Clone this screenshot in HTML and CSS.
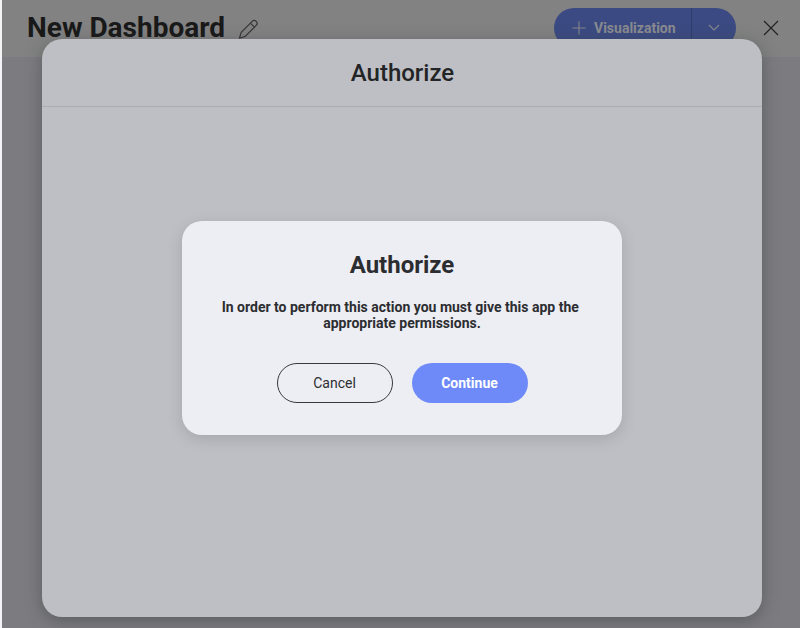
FILE: index.html
```html
<!DOCTYPE html>
<html lang="en">
<head>
<meta charset="utf-8">
<title>New Dashboard</title>
<link rel="stylesheet" href="styles.css">
</head>
<body>
<div class="app">
  <header class="topbar">
    <h1 class="title">New Dashboard</h1>
    <svg class="pencil" width="22" height="22" viewBox="0 0 22 22"><path d="M1.4 20.2L3.2 14.4L14.2 3.4Q16.2 1.4 18.2 3.4Q20.2 5.4 18.2 7.4L7.2 18.4ZM12.4 5.2L16.4 9.2"/></svg>
    <div class="split">
      <div class="split-main">
        <svg width="14" height="14" viewBox="0 0 14 14"><path d="M7 .5v13M.5 7h13"/></svg>
        <span>Visualization</span>
      </div>
      <div class="split-arrow"><svg width="12" height="8" viewBox="0 0 12 8"><path d="M1 1l5 5 5-5"/></svg></div>
    </div>
    <svg class="close" width="16" height="16" viewBox="0 0 16 16"><path d="M1 1l14 14M15 1L1 15"/></svg>
  </header>
</div>
<section class="panel">
  <h2 class="panel-title">Authorize</h2>
  <div class="panel-body">
    <div class="dialog">
      <h2 class="dialog-title">Authorize</h2>
      <p class="message">In order to perform this action you must give this app the <br>appropriate permissions.</p>
      <div class="actions">
        <button class="btn cancel">Cancel</button>
        <button class="btn continue">Continue</button>
      </div>
    </div>
  </div>
</section>
</body>
</html>
```
FILE: styles.css
```css
* { box-sizing: border-box; }
body { margin: 0; height: 628px; overflow: hidden; position: relative; background: #f4f4f6; font-family: Roboto, sans-serif; color: #2c2d30; }
h1, h2, p { margin: 0; }
svg { display: block; fill: none; flex: none; }
.app { height: 628px; margin-left: 2px; background: #7c7b80; }
.topbar { display: flex; align-items: center; height: 57px; padding: 0 21px 3px 25px; background: #828282; }
.title { width: 198px; margin-top: 2px; font-size: 28px; line-height: 34px; font-weight: 700; color: #191919; white-space: nowrap; }
.pencil { margin: 3px 0 0 13px; stroke: #363636; stroke-width: 1.2; stroke-linejoin: round; }
.split { display: flex; width: 182px; height: 40px; margin: 2px 27px 0 auto; border-radius: 20px; overflow: hidden; background: #3b4a82; color: #8a8b90; font-size: 14px; font-weight: 700; }
.split svg { stroke: #85868c; stroke-width: 1.1; }
.split-main { display: flex; align-items: center; width: 138px; padding-left: 18px; gap: 8px; border-right: 1px solid #303d6c; }
.split-arrow { display: flex; flex: 1; align-items: center; justify-content: center; }
.close { margin-top: 2px; stroke: #202020; stroke-width: 1.1; }
.panel { position: absolute; left: 42px; top: 39px; width: 720px; height: 578px; display: flex; flex-direction: column; border-radius: 20px; background: #bebfc4; box-shadow: 0 4px 16px rgba(60, 65, 65, .5); }
.panel-title { height: 68px; padding-left: 1px; border-bottom: 1px solid #abadb1; line-height: 68px; text-align: center; font-size: 24px; font-weight: 500; color: #232426; }
.panel-body { flex: 1; display: flex; justify-content: center; align-items: flex-start; padding-top: 114px; }
.dialog { width: 440px; height: 214px; padding-top: 29px; border-radius: 20px; background: #edeef4; text-align: center; box-shadow: 0 4px 16px rgba(0, 0, 0, .13); }
.dialog-title { font-size: 24px; line-height: 30px; font-weight: 700; }
.message { margin-top: 19px; font-size: 14px; line-height: 16px; font-weight: 700; white-space: pre; }
.actions { display: flex; justify-content: center; gap: 19px; margin-top: 32px; }
.btn { width: 116px; height: 40px; padding: 0; border: 0; border-radius: 20px; font: 400 14px/40px Roboto, sans-serif; color: #2c2d30; }
.cancel { border: 1px solid #38393c; line-height: 38px; background: transparent; }
.continue { background: #6e8af8; color: #fff; font-weight: 700; }
```
